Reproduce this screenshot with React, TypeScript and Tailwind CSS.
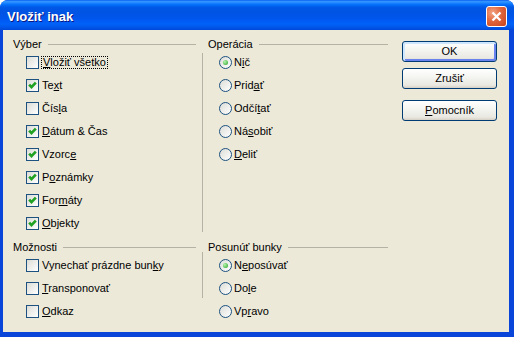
import React from 'react';

const Label = ({ t, u }: { t: string; u: number }) => (
  <>
    {t.slice(0, u)}
    <span className="underline underline-offset-[1px]">{t[u]}</span>
    {t.slice(u + 1)}
  </>
);

const CheckBox = ({ checked }: { checked?: boolean }) => (
  <span className="block w-[13px] h-[13px] shrink-0 border border-[#1C5180] bg-[linear-gradient(135deg,#DCDCD7,#FFFFFF)]">
    {checked && (
      <svg width="11" height="11" viewBox="0 0 11 11" className="block">
        <path d="M2.2 4.6 L4.5 7.1 L8.8 2.6" fill="none" stroke="#21A121" strokeWidth="2.7" />
      </svg>
    )}
  </span>
);

const Radio = ({ checked }: { checked?: boolean }) => (
  <span className="flex items-center justify-center w-[13px] h-[13px] shrink-0 rounded-full border border-[#1C5180] bg-[linear-gradient(135deg,#DCDCD7,#FFFFFF)]">
    {checked && <span className="block w-[5px] h-[5px] rounded-full bg-[radial-gradient(circle_at_35%_35%,#B8F5B0,#21A121)]" />}
  </span>
);

const GroupHeader = ({ label }: { label: string }) => (
  <div className="flex items-center h-[14px]">
    <span>{label}</span>
    <span className="flex-1 h-px ml-[6px] bg-[#B4B2A5]" />
  </div>
);

const CheckRow = ({ t, u, checked, focus }: { t: string; u: number; checked?: boolean; focus?: boolean }) => (
  <div className="flex items-center h-[23px] pl-[13px]">
    <CheckBox checked={checked} />
    <span className={focus ? 'ml-[2px] px-px border border-dotted border-black leading-[11px]' : 'ml-[3px]'}>
      <Label t={t} u={u} />
    </span>
  </div>
);

const RadioRow = ({ t, u, checked }: { t: string; u: number; checked?: boolean }) => (
  <div className="flex items-center h-[23px]">
    <Radio checked={checked} />
    <span className="ml-[2px]">
      <Label t={t} u={u} />
    </span>
  </div>
);

const XpButton = ({ children, def, className }: { children: React.ReactNode; def?: boolean; className?: string }) => (
  <button
    className={
      'h-[21px] w-[95px] rounded-[3px] border border-[#003C74] text-[11px] text-black bg-[linear-gradient(to_bottom,#FFFFFF,#F4F4F0_45%,#E9E8E1_85%,#D6D0C5)] ' +
      (def ? 'shadow-[inset_1px_1px_0_1px_#CEE7FF,inset_-1px_-1px_0_1px_#6982EE] ' : '') +
      (className || '')
    }
  >
    {children}
  </button>
);

export default function App() {
  const vyber = [
    { t: 'Vložiť všetko', u: 0, checked: false, focus: true },
    { t: 'Text', u: 2, checked: true },
    { t: 'Čísla', u: 3, checked: false },
    { t: 'Dátum & Čas', u: 0, checked: true },
    { t: 'Vzorce', u: 5, checked: true },
    { t: 'Poznámky', u: 1, checked: true },
    { t: 'Formáty', u: 3, checked: true },
    { t: 'Objekty', u: 0, checked: true },
  ];
  const operacia = [
    { t: 'Nič', u: 1, checked: true },
    { t: 'Pridať', u: 4 },
    { t: 'Odčítať', u: 4 },
    { t: 'Násobiť', u: 2 },
    { t: 'Deliť', u: 0 },
  ];
  const moznosti = [
    { t: 'Vynechať prázdne bunky', u: 20 },
    { t: 'Transponovať', u: 0 },
    { t: 'Odkaz', u: 0 },
  ];
  const posunut = [
    { t: 'Neposúvať', u: 1, checked: true },
    { t: 'Dole', u: 2 },
    { t: 'Vpravo', u: 2 },
  ];

  return (
    <div className="w-[514px] h-[337px] bg-white overflow-hidden font-['Liberation_Sans',Arial,sans-serif]">
      <div className="flex flex-col h-full rounded-t-[8px] bg-[#0A45DA] overflow-hidden">
        {/* title bar */}
        <div className="flex items-center h-[30px] shrink-0 pt-[3px] pl-[7px] pr-[7px] bg-[linear-gradient(to_bottom,#0058EE_0%,#3593FF_4%,#288EFF_8%,#127DFF_12%,#036FFC_16%,#0262EE_20%,#0057E5_26%,#0054E3_40%,#0055EB_60%,#005BF5_70%,#0062F8_80%,#0058EB_90%,#0048D8_100%)]">
          <span className="flex-1 text-[13px] font-bold text-white [text-shadow:1px_1px_#0A1883]">Vložiť inak</span>
          <span className="flex items-center justify-center w-[21px] h-[21px] rounded-[3px] border border-white bg-[radial-gradient(circle_at_30%_30%,#F2A585,#E2663C_45%,#C8421C)]">
            <svg width="11" height="11" viewBox="0 0 11 11">
              <path d="M1.5 1.5 L9.5 9.5 M9.5 1.5 L1.5 9.5" stroke="white" strokeWidth="2.3" />
            </svg>
          </span>
        </div>

        {/* body */}
        <div className="flex-1 ml-[3px] mr-[5px] mb-[5px] bg-[#ECE9D8] text-[11px] text-black">
          <div className="flex pl-[10px] pt-[7px]">
            <div className="w-[375px] flex flex-col">
              {/* top section */}
              <div className="flex">
                <div className="w-[189px] pr-[6px]">
                  <GroupHeader label="Výber" />
                  {vyber.map((r, i) => (
                    <CheckRow key={i} t={r.t} u={r.u} checked={r.checked} focus={r.focus} />
                  ))}
                </div>
                <div className="flex-1 flex flex-col">
                  <div className="pl-[6px]">
                    <GroupHeader label="Operácia" />
                  </div>
                  <div className="flex flex-1">
                    <div className="w-px bg-[#B4B2A5] mt-[2px] mb-[3px]" />
                    <div className="pl-[16px]">
                      {operacia.map((r, i) => (
                        <RadioRow key={i} t={r.t} u={r.u} checked={r.checked} />
                      ))}
                    </div>
                  </div>
                </div>
              </div>

              {/* bottom section */}
              <div className="flex mt-[5px]">
                <div className="w-[189px] pr-[6px]">
                  <GroupHeader label="Možnosti" />
                  {moznosti.map((r, i) => (
                    <CheckRow key={i} t={r.t} u={r.u} />
                  ))}
                </div>
                <div className="flex-1 flex flex-col">
                  <div className="pl-[6px]">
                    <GroupHeader label="Posunúť bunky" />
                  </div>
                  <div className="flex">
                    <div className="w-px h-[46px] self-start bg-[#B4B2A5] mt-[-2px]" />
                    <div className="pl-[16px]">
                      {posunut.map((r, i) => (
                        <RadioRow key={i} t={r.t} u={r.u} checked={r.checked} />
                      ))}
                    </div>
                  </div>
                </div>
              </div>
            </div>

            {/* buttons */}
            <div className="ml-[14px] flex flex-col">
              <XpButton def className="mt-[4px]">OK</XpButton>
              <XpButton className="mt-[6px]">Zrušiť</XpButton>
              <XpButton className="mt-[11px]">
                <Label t="Pomocník" u={0} />
              </XpButton>
            </div>
          </div>
        </div>
      </div>
    </div>
  );
}
